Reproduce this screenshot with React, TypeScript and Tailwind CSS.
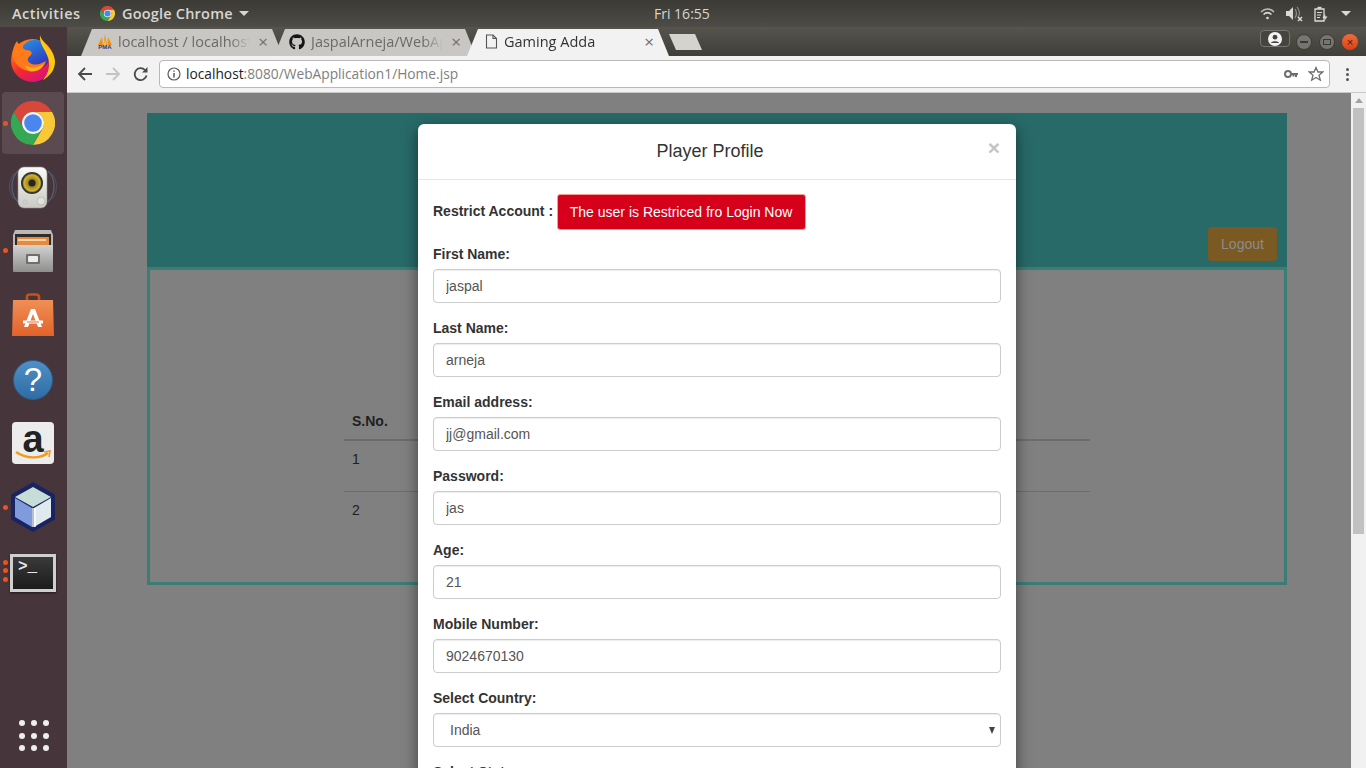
import { FaGithub } from "react-icons/fa";

const uiFont = "font-['Open_Sans',sans-serif]";

const fields = [
  { label: "First Name:", value: "jaspal" },
  { label: "Last Name:", value: "arneja" },
  { label: "Email address:", value: "jj@gmail.com" },
  { label: "Password:", value: "jas" },
  { label: "Age:", value: "21" },
  { label: "Mobile Number:", value: "9024670130" },
];

const ChromeLogo = ({ size }: { size: number }) => (
  <svg width={size} height={size} viewBox="0 0 48 48">
    <path fill="#d9463a" d="M3.2 12A24 24 0 0 1 44.8 12H24A12 12 0 0 0 13.6 30Z" />
    <path fill="#f9c837" d="M44.8 12A24 24 0 0 1 24 48L34.4 30A12 12 0 0 0 24 12Z" />
    <path fill="#35a853" d="M3.2 12A24 24 0 0 0 24 48L34.4 30A12 12 0 0 1 13.6 30Z" />
    <circle cx="24" cy="24" r="12" fill="#f4f4f4" />
    <circle cx="24" cy="24" r="9.6" fill="#4b86ee" />
  </svg>
);

const Firefox = () => (
  <svg width="46" height="48" viewBox="0 0 46 48">
    <defs>
      <linearGradient id="ffBase" x1="0.1" y1="0.1" x2="0.7" y2="1">
        <stop offset="0" stopColor="#ff8a1c" />
        <stop offset="0.55" stopColor="#f4292f" />
        <stop offset="1" stopColor="#d9107f" />
      </linearGradient>
      <linearGradient id="ffGlobe" x1="0.2" y1="0" x2="0.7" y2="1">
        <stop offset="0" stopColor="#1f8fe6" />
        <stop offset="1" stopColor="#3a2ab5" />
      </linearGradient>
    </defs>
    <circle cx="22.5" cy="25.5" r="21.5" fill="url(#ffBase)" />
    <circle cx="25" cy="20" r="15" fill="url(#ffGlobe)" />
    <path fill="#ffc90e" d="M30 0C31 7 44 13 45 26C45 35 40 41 33 45C39 38 41 29 37 20C34 13 29 8 30 0Z" />
    <path fill="#ff7a18" d="M2 19C3 14 4 10 7 6C8 9 10 10 13 10C12 13 14 15 18 15C22 16 23 18 20 21C17 23 17 26 20 28C25 31 31 29 36 26C34 34 26 38 18 36C9 34 4 28 2 19Z" />
    <path fill="#ffb01f" d="M15 30C20 34 28 33 34 29C31 35 25 37 20 36C18 35 16 33 15 30Z" />
  </svg>
);

const Rhythmbox = () => (
  <svg width="50" height="46" viewBox="0 0 50 46">
    <defs>
      <linearGradient id="rbBody" x1="0" y1="0" x2="0" y2="1">
        <stop offset="0" stopColor="#fafaf6" />
        <stop offset="1" stopColor="#c9cac4" />
      </linearGradient>
      <radialGradient id="rbCone">
        <stop offset="0.3" stopColor="#8f7a1e" />
        <stop offset="0.85" stopColor="#d3b42c" />
        <stop offset="1" stopColor="#4a4a38" />
      </radialGradient>
    </defs>
    <path d="M10 7C2 14 2 30 10 38" stroke="#5a6a86" strokeWidth="1.5" fill="none" opacity="0.7" />
    <path d="M6 10C0 17 0 28 6 35" stroke="#5a6a86" strokeWidth="1" fill="none" opacity="0.45" />
    <path d="M40 7C48 14 48 30 40 38" stroke="#5a6a86" strokeWidth="1.5" fill="none" opacity="0.7" />
    <path d="M44 10C50 17 50 28 44 35" stroke="#5a6a86" strokeWidth="1" fill="none" opacity="0.45" />
    <rect x="10" y="3" width="29" height="41" rx="6" fill="url(#rbBody)" stroke="#8f908b" strokeWidth="0.6" />
    <circle cx="24" cy="19" r="11" fill="#33332e" />
    <circle cx="24" cy="19" r="9.5" fill="url(#rbCone)" />
    <circle cx="24" cy="19" r="3.5" fill="#26261f" />
    <circle cx="33" cy="37" r="4" fill="#e2e2dc" stroke="#aaa" strokeWidth="0.6" />
    <circle cx="17" cy="38" r="2" fill="none" stroke="#bbb" strokeWidth="0.6" />
  </svg>
);

const FilesCabinet = () => (
  <svg width="42" height="44" viewBox="0 0 42 44">
    <defs>
      <linearGradient id="fcBody" x1="0" y1="0" x2="0" y2="1">
        <stop offset="0" stopColor="#d2d2d0" />
        <stop offset="1" stopColor="#8f8f8d" />
      </linearGradient>
    </defs>
    <path fill="#b9b9b7" d="M3 1H39L41 6V40H1V6Z" />
    <rect x="3" y="5" width="36" height="12" fill="#302c2a" />
    <rect x="5" y="8" width="32" height="9" fill="#e58a3f" />
    <rect x="6" y="10" width="28" height="2" fill="#f6d6a8" />
    <rect x="1" y="16" width="40" height="27" rx="1" fill="url(#fcBody)" />
    <rect x="14" y="25" width="14" height="10" rx="1" fill="#6f6f6d" />
    <rect x="16" y="27" width="10" height="6" rx="1" fill="#ecece9" />
  </svg>
);

const SoftwareBag = () => (
  <svg width="42" height="44" viewBox="0 0 42 44">
    <defs>
      <linearGradient id="bagBody" x1="0" y1="0" x2="0" y2="1">
        <stop offset="0" stopColor="#f08f55" />
        <stop offset="1" stopColor="#e2632b" />
      </linearGradient>
    </defs>
    <path fill="none" stroke="#c8511b" strokeWidth="2.6" d="M15 13V4C15 2 16 1.5 18 1.5H24C26 1.5 27 2 27 4V13" />
    <path fill="url(#bagBody)" d="M1 7H41L42 43H0Z" />
    <path fill="#fff" d="M19 16H23L30 34H26L21 21L16 34H12Z" />
    <rect x="11" y="27.5" width="20" height="3" fill="#fff" />
    <rect x="15" y="28.5" width="12" height="1" fill="#e9703a" />
  </svg>
);

const Cube = () => (
  <svg width="46" height="50" viewBox="0 0 46 50">
    <path fill="#1b2463" d="M23 1L44 13V37L23 49L2 37V13Z" stroke="#1b2463" strokeWidth="2" strokeLinejoin="round" />
    <path fill="#c6ddd8" d="M23 5L41 15L23 25L5 15Z" />
    <path fill="#7f9bdb" d="M5 16L22 26V45L5 35Z" />
    <path fill="#dfe9ee" d="M24 26L41 16V35L24 45Z" />
    <path fill="#fff" opacity="0.7" d="M22 26H26V45L22 45Z" />
  </svg>
);

const DockItem = ({ dots = [], active, children }: { dots?: number[]; active?: boolean; children: React.ReactNode }) => (
  <div className="relative flex h-16 w-full items-center justify-center pr-px">
    {active && <div className="absolute bottom-[1px] left-[2px] right-[3px] top-[1px] rounded bg-[#5b4b50]" />}
    {dots.map((top) => (
      <span key={top} style={{ top }} className="absolute left-[3px] h-[5px] w-[5px] rounded-full bg-[#e95420]" />
    ))}
    <div className="relative flex items-center justify-center">{children}</div>
  </div>
);

const Dock = () => (
  <aside className="flex h-full w-[67px] shrink-0 flex-col items-center bg-[#46363b]">
    <DockItem><Firefox /></DockItem>
    <DockItem dots={[30]} active><ChromeLogo size={44} /></DockItem>
    <DockItem><Rhythmbox /></DockItem>
    <DockItem dots={[29]}><FilesCabinet /></DockItem>
    <DockItem><SoftwareBag /></DockItem>
    <DockItem>
      <div className="mt-[2px] flex h-10 w-10 items-center justify-center rounded-full border border-[#2c5f8e] bg-gradient-to-b from-[#4f90c8] to-[#2f6ca3] font-['Liberation_Sans',sans-serif] text-[33px] font-normal text-white">?</div>
    </DockItem>
    <DockItem>
      <div className="relative flex h-[42px] w-[42px] justify-center rounded-sm bg-[#ececec] font-['Liberation_Sans',sans-serif] text-[38px] leading-[34px] font-bold text-[#222]">
        a
        <svg className="absolute bottom-1 left-[2px]" width="38" height="10" viewBox="0 0 38 10">
          <path d="M2 2C12 9 26 9 34 3" fill="none" stroke="#f39a1e" strokeWidth="2.4" />
          <path d="M30 2L36 1L35 7" fill="none" stroke="#f39a1e" strokeWidth="1.6" />
        </svg>
      </div>
    </DockItem>
    <DockItem dots={[30]}><Cube /></DockItem>
    <DockItem dots={[21, 29, 38]}>
      <div className="mt-[4px] flex h-[38px] w-[46px] items-start justify-start border-[3px] border-[#cfcfcd] bg-gradient-to-b from-[#3a3a3a] to-[#1c1c1c] pl-[5px] font-['Liberation_Mono',monospace] text-[16px] leading-[20px] font-bold text-[#e8e8e8] shadow-[0_1px_2px_#0008]">
        {">_"}
      </div>
    </DockItem>
    <div className="mt-auto mb-[17px] grid grid-cols-3 gap-x-[6px] gap-y-[6.5px]">
      {Array.from({ length: 9 }).map((_, i) => (
        <span key={i} className="h-[6px] w-[6px] rounded-full bg-[#eeeeee]" />
      ))}
    </div>
  </aside>
);

const TopBar = () => (
  <header className={`flex h-[27px] shrink-0 items-center bg-gradient-to-b from-[#3b3a35] to-[#4e4c46] text-[14.5px] font-semibold text-[#d8d6d1] ${uiFont}`}>
    <span className="ml-3 w-[88px] tracking-[0.5px]">Activities</span>
    <ChromeLogo size={15} />
    <span className="ml-[7px] tracking-[0.2px]">Google Chrome</span>
    <span className="ml-[6px] h-0 w-0 border-x-[5px] border-t-[5px] border-x-transparent border-t-[#d8d6d1]" />
    <span className="absolute left-[654px] text-[14px] font-normal">Fri 16:55</span>
    <div className="ml-auto mr-[15px] flex items-center gap-[11px]">
      <svg width="15" height="12" viewBox="0 0 15 12" fill="none" stroke="#dcdad5" strokeWidth="1.5">
        <path d="M1 4C5 0 10 0 14 4" opacity="0.8" />
        <path d="M3.5 6.5C6 4 9 4 11.5 6.5" />
        <circle cx="7.5" cy="10" r="1.3" fill="#dcdad5" stroke="none" />
      </svg>
      <svg width="17" height="16" viewBox="0 0 17 16">
        <path fill="#dcdad5" d="M0 5H3L7 1V14L3 10H0Z" />
        <path fill="none" stroke="#8f8e88" strokeWidth="1.2" d="M9 3C11 6 11 9 9 12M11 1C14 5 14 9 12 11" />
        <path stroke="#dcdad5" strokeWidth="1.5" d="M12 11L16 15M16 11L12 15" />
      </svg>
      <svg width="14" height="16" viewBox="0 0 14 16" fill="none" stroke="#dcdad5" strokeWidth="1.3">
        <path d="M1 3H10V15H1Z" />
        <rect x="3.5" y="0.8" width="4" height="2" fill="#dcdad5" stroke="none" />
        <path d="M3 6.5H8M3 9H7M3 11.5H6" strokeWidth="1" />
        <path d="M11 8L8.5 12H11L10 15.5L13.5 10.5H11.5Z" fill="#dcdad5" stroke="none" />
      </svg>
      <span className="ml-[2px] h-0 w-0 border-x-[5px] border-t-[5px] border-x-transparent border-t-[#dcdad5]" />
    </div>
  </header>
);

const Tab = ({ title, icon, active, className }: { title: string; icon: React.ReactNode; active?: boolean; className: string }) => (
  <div className={`flex h-[27px] w-[202px] items-center pb-[2px] pl-[14px] pr-[15px] text-[14.5px] [clip-path:polygon(0_100%,11px_0,calc(100%-11px)_0,100%_100%)] ${active ? "bg-[#f2f2f2] text-[#333]" : "bg-[#c9c7c4] text-[#6a6a6a]"} ${className}`}>
    <span className="flex w-[20px] shrink-0 justify-center">{icon}</span>
    <span className="ml-[3px] min-w-0 flex-1 overflow-hidden whitespace-nowrap [mask-image:linear-gradient(to_right,#000_85%,transparent)]">{title}</span>
    <span className="ml-[8px] text-[17px] leading-none text-[#6f6f6f]">×</span>
  </div>
);

const TabStrip = () => (
  <div className={`relative flex h-[29px] shrink-0 items-end bg-gradient-to-b from-[#55544d] to-[#3f3e38] pl-[14px] ${uiFont}`}>
    <Tab
      title="localhost / localhost"
      className="relative"
      icon={
        <span className="flex h-[16px] w-[18px] flex-col items-center justify-end">
          <svg width="16" height="11" viewBox="0 0 16 11">
            <path fill="#f29111" d="M1 11L5 3L6 11ZM6.5 11L8 0L10 11ZM10.5 11L11 3L15 11Z" />
            <path fill="#fbc15e" d="M7 11L8 5L9 11Z" />
          </svg>
          <span className="font-['Liberation_Sans',sans-serif] text-[6px] leading-[5px] font-bold text-[#2c3a80]">PMA</span>
        </span>
      }
    />
    <Tab title="JaspalArneja/WebApplication1" className="relative -ml-[9px]" icon={<FaGithub className="-ml-[3px] text-[16px] text-[#161616]" />} />
    <Tab
      title="Gaming Adda"
      active
      className="relative -ml-[9px]"
      icon={
        <svg width="13" height="15" viewBox="0 0 13 15" fill="none" stroke="#555" strokeWidth="1.1">
          <path d="M1.5 1H8L11.5 4.5V14H1.5Z" />
          <path d="M8 1V4.5H11.5" />
        </svg>
      }
    />
    <div className="mb-[6px] h-4 w-[33px] bg-[#d5d3d0] [clip-path:polygon(0_0,26px_0,100%_100%,7px_100%)]" />
    <div className="absolute right-[8px] top-[3px] flex items-start gap-[7px]">
      <div className="-mr-px flex h-[17px] w-[30px] items-center justify-center rounded-sm border border-[#77766f] bg-[#45443e]">
        <svg width="14" height="14" viewBox="0 0 14 14">
          <circle cx="7" cy="7" r="7" fill="#f4f4f4" />
          <circle cx="7" cy="5.2" r="2.4" fill="#45443e" />
          <path d="M2.8 11C4 8.6 10 8.6 11.2 11Z" fill="#45443e" />
        </svg>
      </div>
      <span className="mt-[4px] flex h-4 w-4 items-center justify-center rounded-full border border-[#3c3b36] bg-[#76756e]">
        <span className="h-[1.5px] w-2 bg-[#3a3934]" />
      </span>
      <span className="mt-[4px] flex h-4 w-4 items-center justify-center rounded-full border border-[#3c3b36] bg-[#76756e]">
        <span className="h-[6px] w-2 border border-[#3a3934]" />
      </span>
      <span className="mt-[4px] flex h-4 w-4 items-center justify-center rounded-full bg-gradient-to-b from-[#f26a3a] to-[#db3f12] font-['Liberation_Sans',sans-serif] text-[11px] leading-none text-[#4a1a08]">
        ×
      </span>
    </div>
  </div>
);

const Toolbar = () => (
  <div className="flex h-[37px] shrink-0 items-center border-b border-[#c9c9c9] bg-[#f2f2f2] pl-[10px] pr-[17px]">
    <div className="flex w-[82px] items-center gap-[12px]">
      <svg width="16" height="16" viewBox="0 0 16 16" fill="none" stroke="#4a4a4a" strokeWidth="1.8">
        <path d="M15 8H2M8 2L2 8L8 14" />
      </svg>
      <svg width="16" height="16" viewBox="0 0 16 16" fill="none" stroke="#c4c4c4" strokeWidth="1.8">
        <path d="M1 8H14M8 2L14 8L8 14" />
      </svg>
      <svg width="16" height="16" viewBox="0 0 16 16" fill="none" stroke="#4a4a4a" strokeWidth="1.8">
        <path d="M13.5 9.5A6 6 0 1 1 12 4" />
        <path d="M14.5 1V6.5H9" fill="#4a4a4a" stroke="none" />
      </svg>
    </div>
    <div className={`flex h-[28px] flex-1 items-center rounded-sm border border-[#b9b9b9] bg-white pl-[7px] pr-[5px] text-[13.75px] ${uiFont}`}>
      <svg width="14" height="14" viewBox="0 0 14 14" fill="none" stroke="#5a5a5a" strokeWidth="1.2">
        <circle cx="7" cy="7" r="6" />
        <path d="M7 6V10.5M7 3.4V4.8" strokeWidth="1.5" />
      </svg>
      <span className="ml-[5px] text-[#222]">localhost</span>
      <span className="text-[#808080]">:8080/WebApplication1/Home.jsp</span>
      <div className="ml-auto flex items-center gap-[9px]">
        <svg width="15" height="10" viewBox="0 0 15 10" fill="none" stroke="#6e6e6e" strokeWidth="2">
          <circle cx="4" cy="5" r="3" />
          <path d="M7 5H14M12 5V8M9.5 5V7.5" />
        </svg>
        <svg width="16" height="16" viewBox="0 0 16 16" fill="none" stroke="#6e6e6e" strokeWidth="1.3">
          <path d="M8 1.5L10 6H14.8L11 9.2L12.3 14.2L8 11.5L3.7 14.2L5 9.2L1.2 6H6Z" />
        </svg>
      </div>
    </div>
    <div className="ml-[16px] flex flex-col gap-[2px]">
      <span className="h-[3px] w-[3px] rounded-full bg-[#555]" />
      <span className="h-[3px] w-[3px] rounded-full bg-[#555]" />
      <span className="h-[3px] w-[3px] rounded-full bg-[#555]" />
    </div>
  </div>
);

const BackgroundPage = () => (
  <main className="min-w-0 flex-1 pl-[80px] pr-[64px] pt-[20px] font-['Liberation_Sans',sans-serif] text-[14px]">
    <div className="flex h-[154px] items-end justify-end bg-[#276a68] pb-[6px] pr-[10px]">
      <div className="flex h-[34px] w-[69px] items-center justify-center rounded bg-[#7a5a22] text-[#8c8c8c]">Logout</div>
    </div>
    <div className="h-[318px] border-[3px] border-[#3b7d73] pl-[194px] pt-[134px]">
      <table className="w-[746px] text-[#1e1e1e]">
        <thead>
          <tr className="border-b-2 border-[#6c6c6c]">
            <th className="h-[36px] px-2 text-left font-bold">S.No.</th>
          </tr>
        </thead>
        <tbody>
          <tr className="border-b border-[#6c6c6c]">
            <td className="h-[51px] px-2 pt-2 align-top leading-5">1</td>
          </tr>
          <tr>
            <td className="h-[51px] px-2 pt-2 align-top leading-5">2</td>
          </tr>
        </tbody>
      </table>
    </div>
  </main>
);

const Scrollbar = () => (
  <div className="flex h-full w-[15px] shrink-0 flex-col items-center bg-[#f1f1f1] pt-[5px]">
    <span className="h-0 w-0 border-x-[4px] border-b-[5px] border-x-transparent border-b-[#a3a3a3]" />
    <div className="mt-[5px] h-[426px] w-[11px] bg-[#c1c1c1]" />
  </div>
);

const ProfileModal = () => (
  <section className="absolute left-[418px] top-[124px] w-[598px] rounded-md bg-white font-['Liberation_Sans',sans-serif] text-[14px] text-[#333] shadow-[0_5px_15px_rgba(0,0,0,0.5)]">
    <div className="relative flex h-[56px] items-center justify-center border-b border-[#e5e5e5] pr-[14px]">
      <h4 className="text-[18px]">Player Profile</h4>
      <span className="absolute right-[16px] top-[12px] text-[21px] leading-[24px] font-bold text-[#c4c4c4]">×</span>
    </div>
    <div className="px-[15px] pt-[14px]">
      <div className="mb-[14px] flex items-center">
        <b className="-mt-[2px]">Restrict Account :</b>
        <button type="button" className="ml-[4px] h-[36px] w-[249px] rounded-[3px] border border-[#f4a090] bg-[#d6001a] pr-px text-center text-white">
          The user is Restriced fro Login Now
        </button>
      </div>
      {fields.map((field) => (
        <div key={field.label} className="mb-[15px]">
          <label className="mb-[5px] block h-5 leading-5 font-bold">{field.label}</label>
          <input
            readOnly
            value={field.value}
            className="block h-[34px] w-full rounded border border-[#ccc] bg-white px-3 text-[#555] shadow-[inset_0_1px_1px_rgba(0,0,0,0.075)] outline-none"
          />
        </div>
      ))}
      <div className="mb-[15px]">
        <label className="mb-[5px] block h-5 leading-5 font-bold">Select Country:</label>
        <div className="relative">
          <select className="block h-[34px] w-full appearance-none rounded border border-[#ccc] bg-white pl-4 pr-3 text-[#555] shadow-[inset_0_1px_1px_rgba(0,0,0,0.075)] outline-none">
            <option>India</option>
          </select>
          <span className="absolute right-[6px] top-[14px] h-0 w-0 border-x-[3px] border-t-[7px] border-x-transparent border-t-[#444]" />
        </div>
      </div>
      <label className="block h-5 leading-5 font-bold">Select State:</label>
      <div className="h-[60px]" />
    </div>
  </section>
);

export default function App() {
  return (
    <div className="relative flex h-[768px] w-[1366px] flex-col overflow-hidden bg-[#808080]">
      <TopBar />
      <div className="flex min-h-0 flex-1">
        <Dock />
        <div className="flex min-w-0 flex-1 flex-col">
          <TabStrip />
          <Toolbar />
          <div className="flex min-h-0 flex-1">
            <BackgroundPage />
            <Scrollbar />
          </div>
        </div>
      </div>
      <ProfileModal />
    </div>
  );
}
